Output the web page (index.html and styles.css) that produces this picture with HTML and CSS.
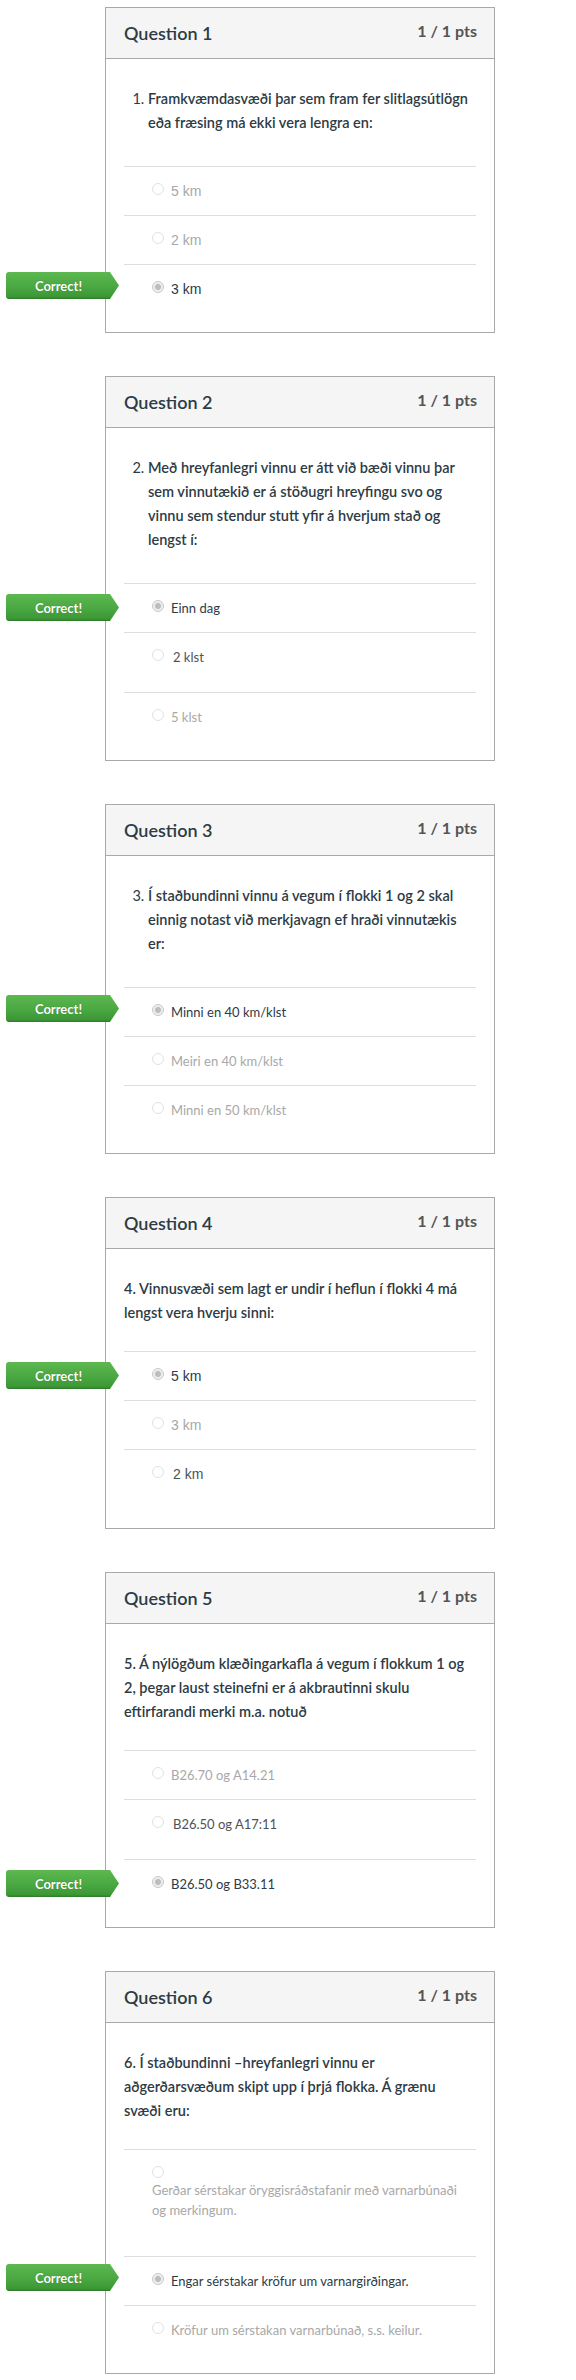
FILE: index.html
```html
<!DOCTYPE html>
<html lang="is">
<head>
<meta charset="utf-8">
<title>Quiz results</title>
<link rel="stylesheet" href="styles.css">
</head>
<body>
<main class="quiz">

  <section class="card">
    <header class="card-head">
      <h2 class="q-title">Question 1</h2>
      <div class="q-pts">1 / 1 pts</div>
    </header>
    <div class="card-body">
      <ol class="q-list" start="1"><li><strong class="q-text">Framkvæmdasvæði þar sem fram fer slitlagsútlögn eða fræsing má ekki vera lengra en:</strong></li></ol>
      <div class="answers">
        <div class="answer faded arial"><span class="radio"></span><span class="label">5 km</span></div>
        <div class="answer faded arial"><span class="radio"></span><span class="label">2 km</span></div>
        <div class="answer selected arial"><span class="badge">Correct!</span><span class="radio"></span><span class="label">3 km</span></div>
      </div>
    </div>
  </section>

  <section class="card">
    <header class="card-head">
      <h2 class="q-title">Question 2</h2>
      <div class="q-pts">1 / 1 pts</div>
    </header>
    <div class="card-body">
      <ol class="q-list" start="2"><li><strong class="q-text">Með hreyfanlegri vinnu er átt við bæði vinnu þar sem vinnutækið er á stöðugri hreyfingu svo og vinnu sem stendur stutt yfir á hverjum stað og lengst í:</strong></li></ol>
      <div class="answers">
        <div class="answer selected"><span class="badge badge-low">Correct!</span><span class="radio"></span><span class="label">Einn dag</span></div>
        <div class="answer mid tall"><span class="radio"></span><span class="label">2 klst</span></div>
        <div class="answer faded"><span class="radio"></span><span class="label">5 klst</span></div>
      </div>
    </div>
  </section>

  <section class="card">
    <header class="card-head">
      <h2 class="q-title">Question 3</h2>
      <div class="q-pts">1 / 1 pts</div>
    </header>
    <div class="card-body">
      <ol class="q-list" start="3"><li><strong class="q-text">Í staðbundinni vinnu á vegum í flokki 1 og 2 skal einnig notast við merkjavagn ef hraði vinnutækis er:</strong></li></ol>
      <div class="answers">
        <div class="answer selected"><span class="badge">Correct!</span><span class="radio"></span><span class="label">Minni en 40 km/klst</span></div>
        <div class="answer faded"><span class="radio"></span><span class="label">Meiri en 40 km/klst</span></div>
        <div class="answer faded"><span class="radio"></span><span class="label">Minni en 50 km/klst</span></div>
      </div>
    </div>
  </section>

  <section class="card">
    <header class="card-head">
      <h2 class="q-title">Question 4</h2>
      <div class="q-pts">1 / 1 pts</div>
    </header>
    <div class="card-body">
      <p class="q-para">4. Vinnusvæði sem lagt er undir í heflun í flokki 4 má lengst vera hverju sinni:</p>
      <div class="answers">
        <div class="answer selected arial"><span class="badge badge-low">Correct!</span><span class="radio"></span><span class="label">5 km</span></div>
        <div class="answer faded arial"><span class="radio"></span><span class="label">3 km</span></div>
        <div class="answer mid tall arial"><span class="radio"></span><span class="label">2 km</span></div>
      </div>
    </div>
  </section>

  <section class="card">
    <header class="card-head">
      <h2 class="q-title">Question 5</h2>
      <div class="q-pts">1 / 1 pts</div>
    </header>
    <div class="card-body">
      <p class="q-para">5. Á nýlögðum klæðingarkafla á vegum í flokkum 1 og 2, þegar laust steinefni er á akbrautinni skulu eftirfarandi merki m.a. notuð</p>
      <div class="answers">
        <div class="answer faded"><span class="radio"></span><span class="label">B26.70 og A14.21</span></div>
        <div class="answer mid tall"><span class="radio"></span><span class="label">B26.50 og A17:11</span></div>
        <div class="answer selected"><span class="badge badge-low">Correct!</span><span class="radio"></span><span class="label">B26.50 og B33.11</span></div>
      </div>
    </div>
  </section>

  <section class="card">
    <header class="card-head">
      <h2 class="q-title">Question 6</h2>
      <div class="q-pts">1 / 1 pts</div>
    </header>
    <div class="card-body">
      <p class="q-para">6. Í staðbundinni –hreyfanlegri vinnu er aðgerðarsvæðum skipt upp í þrjá flokka. Á grænu svæði eru:</p>
      <div class="answers">
        <div class="answer faded stacked"><span class="radio"></span><span class="label">Gerðar sérstakar öryggisráðstafanir með varnarbúnaði og merkingum.</span></div>
        <div class="answer selected"><span class="badge">Correct!</span><span class="radio"></span><span class="label">Engar sérstakar kröfur um varnargirðingar.</span></div>
        <div class="answer faded"><span class="radio"></span><span class="label">Kröfur um sérstakan varnarbúnað, s.s. keilur.</span></div>
      </div>
    </div>
  </section>

</main>
</body>
</html>
```

FILE: styles.css
```css
html, body {
  margin: 0;
  padding: 0;
  background: #ffffff;
}

body {
  font-family: Lato, "Open Sans", "Liberation Sans", sans-serif;
  color: #2d3b45;
}

.quiz {
  display: flex;
  flex-direction: column;
  gap: 43px;
  padding: 7px 0 20px 105px;
}

.card {
  width: 388px;
  border: 1px solid #a9a9a9;
  background: #ffffff;
}

.card-head {
  height: 50px;
  display: flex;
  justify-content: space-between;
  align-items: flex-start;
  padding: 0 17px 0 18px;
  background: #f5f5f5;
  border-bottom: 1px solid #a9a9a9;
}

.q-title {
  margin: 15px 0 0;
  font-size: 18px;
  line-height: 20px;
  font-weight: 600;
  color: #2d3b45;
}

.q-pts {
  margin-top: 13px;
  font-size: 16px;
  line-height: 20px;
  font-weight: 700;
  color: #555555;
}

.card-body {
  padding: 0 18px 19px;
}

.q-list {
  margin: 28px 0 31px;
  padding-left: 24px;
  font-size: 14.5px;
  line-height: 24px;
  font-weight: 400;
  color: #2d3b45;
}

.q-text {
  font-weight: 600;
}

.q-para {
  margin: 28px 0 26px;
  font-size: 14.5px;
  line-height: 24px;
  font-weight: 600;
  color: #2d3b45;
}

.answers {
  display: flex;
  flex-direction: column;
}

.answer {
  position: relative;
  display: flex;
  align-items: flex-start;
  min-height: 20px;
  padding: 14px 0 14px 28px;
  border-top: 1px solid #dedede;
  font-size: 13px;
  line-height: 20px;
}

.answer.tall {
  padding-bottom: 25px;
}

.answer.arial {
  font-family: "Liberation Sans", Arial, sans-serif;
  font-size: 14px;
}

.answer.stacked {
  flex-direction: column;
  padding-bottom: 36px;
}

.answer.stacked .radio {
  margin: 2px 0 2px;
}

.answer.stacked .label {
  padding-right: 10px;
}

.radio {
  flex: none;
  box-sizing: border-box;
  width: 12px;
  height: 12px;
  margin: 2px 7px 0 0;
  border-radius: 50%;
  border: 1px solid #e2e2e2;
  background: #ffffff;
}

.selected .radio {
  border: 1px solid #c9c9c9;
  background: radial-gradient(circle, #bdbdbd 0, #bdbdbd 2.6px, #ececec 3.4px, #f4f4f4 100%);
}

.faded .label {
  color: #a8a8a8;
}

.mid .label {
  color: #4f5254;
  padding-left: 2px;
}

.selected .label {
  color: #2d3b45;
}

.badge {
  position: absolute;
  left: -118px;
  top: 7px;
  width: 113px;
  height: 27px;
  box-sizing: border-box;
  padding-right: 8px;
  display: flex;
  align-items: center;
  justify-content: center;
  clip-path: polygon(0 0, 104px 0, 113px 50%, 104px 100%, 0 100%);
  border-radius: 3px 0 0 3px;
  background: linear-gradient(to bottom, #5cb84f 0%, #4aa842 55%, #3c9636 92%, #2c7a28 100%);
  font-family: Lato, "Liberation Sans", sans-serif;
  font-size: 13px;
  font-weight: 700;
  color: #ffffff;
  text-shadow: 0 0 1px rgba(0, 0, 0, 0.35);
}

.badge.badge-low {
  top: 10px;
}
```
